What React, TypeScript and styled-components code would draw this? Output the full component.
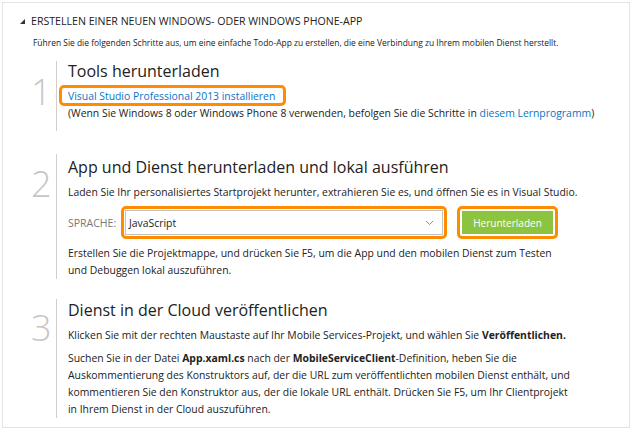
import React from "react";
import styled, { createGlobalStyle } from "styled-components";

const Global = createGlobalStyle`
  html, body { margin: 0; padding: 0; background: #fff; }
  body { font-family: "Open Sans", "Noto Sans", sans-serif; color: #222; }
`;

const Panel = styled.div`
  margin: 2px 0 0 2px;
  width: 626px;
  height: 424px;
  border: 1px solid #e4e4e4;
  box-sizing: content-box;
  display: flex;
  flex-direction: column;
`;

const Header = styled.div`
  display: flex;
  align-items: center;
  gap: 6px;
  padding: 11px 0 0 17px;
  height: 14px;
  font-size: 10.6px;
  color: #222;
  text-transform: uppercase;
`;

const Triangle = styled.span`
  width: 0;
  height: 0;
  border-left: 5px solid transparent;
  border-bottom: 5px solid #333;
`;

const Intro = styled.p`
  margin: 0;
  padding: 8px 0 0 30px;
  font-size: 8.45px;
  line-height: 13px;
  color: #222;
`;

const Steps = styled.div`
  display: flex;
  flex-direction: column;
  padding: 12px 0 0 28px;
`;

const Step = styled.section<{ $h: number; $gap: number }>`
  display: grid;
  grid-template-columns: 26px 1fr;
  min-height: ${(p) => p.$h}px;
  margin-top: ${(p) => p.$gap}px;
`;

const Num = styled.div<{ $top: number }>`
  font-size: 36px;
  font-weight: 300;
  line-height: 36px;
  color: #c6c6c6;
  padding-top: ${(p) => p.$top}px;
  border-right: 1px solid #cfcfcf;
`;

const Body = styled.div`
  padding-left: 11px;
  display: flex;
  flex-direction: column;
`;

const Title = styled.h2<{ $mt?: number }>`
  margin: ${(p) => p.$mt ?? 0}px 0 0 0;
  font-size: 16px;
  font-weight: 400;
  line-height: 20px;
  color: #222;
`;

const Text = styled.p<{ $mt?: number }>`
  margin: ${(p) => p.$mt ?? 0}px 0 0 0;
  font-size: 10.4px;
  line-height: 17px;
  color: #222;
`;

const Link = styled.a`
  color: #0a74c4;
  text-decoration: none;
`;

const Highlight = styled.div`
  display: inline-flex;
  border: 3px solid #ff8c00;
  border-radius: 5px;
  padding: 1px;
`;

const LinkBox = styled(Highlight)`
  align-self: flex-start;
  margin-left: -9px;
  padding: 1px 8px 0 6px;
  margin-top: 4px;
  font-size: 10.4px;
  line-height: 14px;
`;

const Note = styled.p`
  margin: 0;
  font-size: 10.4px;
  line-height: 14px;
  color: #222;
`;

const FormRow = styled.div`
  display: flex;
  align-items: center;
  margin-top: 5px;
`;

const Label = styled.span`
  font-size: 10.5px;
  color: #777;
  width: 53px;
`;

const Select = styled.div`
  width: 318px;
  height: 25px;
  border: 1px solid #c2c2c2;
  background: #fff;
  display: flex;
  align-items: center;
  justify-content: space-between;
  padding: 0 8px 0 3px;
  box-sizing: border-box;
  font-size: 10.4px;
  color: #222;
`;

const ButtonBox = styled(Highlight)`
  margin-left: 10px;
  padding: 2px;
`;

const Button = styled.button`
  width: 91px;
  height: 23px;
  border: none;
  background: #8cc43f;
  color: #fff;
  font-family: inherit;
  font-size: 10px;
  padding: 0;
`;

const Chevron = () => (
  <svg width="9" height="6" viewBox="0 0 9 6">
    <path d="M1 1l3.5 3.5L8 1" fill="none" stroke="#8a8a8a" strokeWidth="1" />
  </svg>
);

export default function App() {
  return (
    <>
      <Global />
      <Panel>
        <Header>
          <Triangle />
          Erstellen einer neuen Windows- oder Windows Phone-App
        </Header>
        <Intro>
          Führen Sie die folgenden Schritte aus, um eine einfache Todo-App zu erstellen, die eine Verbindung zu Ihrem mobilen Dienst herstellt.
        </Intro>
        <Steps>
          <Step $h={70} $gap={0}>
            <Num $top={13}>1</Num>
            <Body>
              <Title>Tools herunterladen</Title>
              <LinkBox>
                <Link>Visual Studio Professional 2013 installieren</Link>
              </LinkBox>
              <Note>
                (Wenn Sie Windows 8 oder Windows Phone 8 verwenden, befolgen Sie die Schritte in{" "}
                <Link>diesem Lernprogramm</Link>)
              </Note>
            </Body>
          </Step>
          <Step $h={122} $gap={23}>
            <Num $top={12}>2</Num>
            <Body>
              <Title $mt={3}>App und Dienst herunterladen und lokal ausführen</Title>
              <Text $mt={7}>
                Laden Sie Ihr personalisiertes Startprojekt herunter, extrahieren Sie es, und öffnen Sie es in Visual Studio.
              </Text>
              <FormRow>
                <Label>SPRACHE:</Label>
                <Highlight>
                  <Select>
                    JavaScript
                    <Chevron />
                  </Select>
                </Highlight>
                <ButtonBox>
                  <Button>Herunterladen</Button>
                </ButtonBox>
              </FormRow>
              <Text $mt={6}>
                Erstellen Sie die Projektmappe, und drücken Sie F5, um die App und den mobilen Dienst zum Testen
                <br />
                und Debuggen lokal auszuführen.
              </Text>
            </Body>
          </Step>
          <Step $h={114} $gap={20}>
            <Num $top={11}>3</Num>
            <Body>
              <Title $mt={1}>Dienst in der Cloud veröffentlichen</Title>
              <Text $mt={7}>
                Klicken Sie mit der rechten Maustaste auf Ihr Mobile Services-Projekt, und wählen Sie{" "}
                <b>Veröffentlichen.</b>
              </Text>
              <Text $mt={6}>
                Suchen Sie in der Datei <b>App.xaml.cs</b> nach der <b>MobileServiceClient</b>-Definition, heben Sie die
                <br />
                Auskommentierung des Konstruktors auf, der die URL zum veröffentlichten mobilen Dienst enthält, und
                <br />
                kommentieren Sie den Konstruktor aus, der die lokale URL enthält. Drücken Sie F5, um Ihr Clientprojekt
                <br />
                in Ihrem Dienst in der Cloud auszuführen.
              </Text>
            </Body>
          </Step>
        </Steps>
      </Panel>
    </>
  );
}
